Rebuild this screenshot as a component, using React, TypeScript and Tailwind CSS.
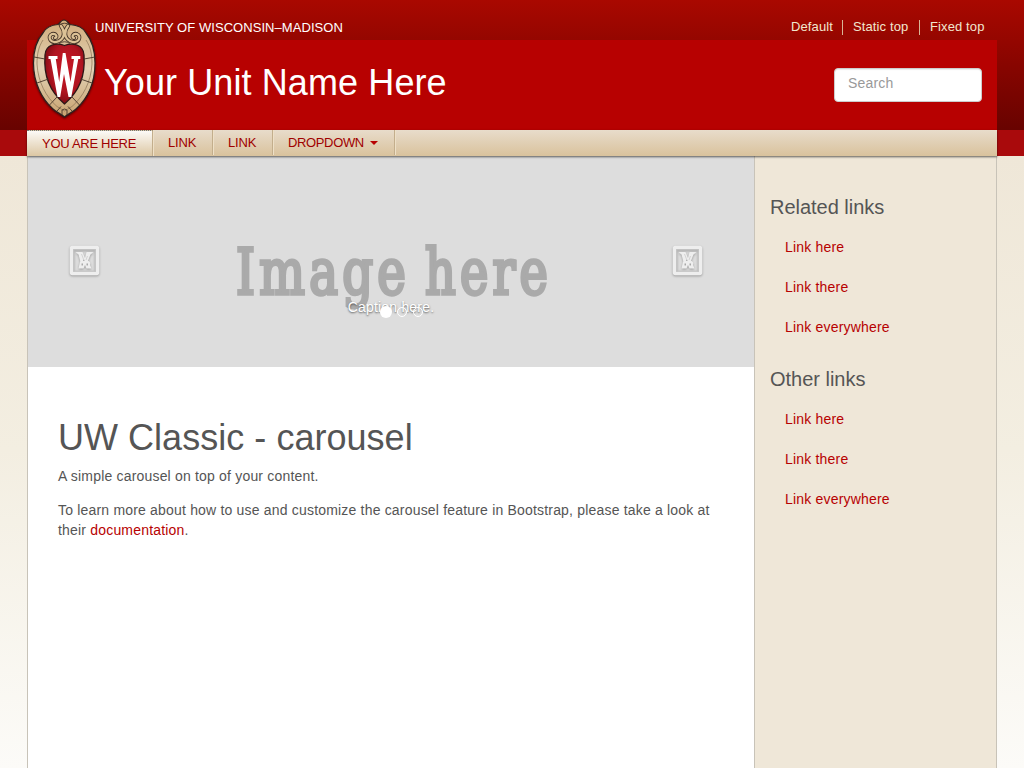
import React from "react";

const CURLS =
  "M61 26C65 31 65 38 59 41C50 45 47 36 52 34C56 33 58 37 55 38M68 26C64 31 64 38 70 41C79 45 82 36 77 34C73 33 71 37 74 38";

function Crest() {
  return (
    <svg className="absolute left-[4px] top-[16px] h-[106px] w-[68px]" viewBox="31 16 68 106" fill="none">
      <defs>
        <linearGradient id="stone" x1="0" y1="0" x2="0" y2="1">
          <stop offset="0" stopColor="#d0ac7b" />
          <stop offset=".5" stopColor="#e2d2b5" />
          <stop offset="1" stopColor="#c9a26f" />
        </linearGradient>
        <radialGradient id="ruby" cx=".55" cy=".4" r=".65">
          <stop offset="0" stopColor="#c91827" />
          <stop offset=".6" stopColor="#b01420" />
          <stop offset="1" stopColor="#74080f" />
        </radialGradient>
        <filter id="crestShadow" x="-20%" y="-20%" width="140%" height="140%">
          <feDropShadow dx="0" dy="1" stdDeviation="1.2" floodColor="#000" floodOpacity=".6" />
        </filter>
      </defs>
      <g filter="url(#crestShadow)">
        <path d="M64 20C60.500 20 60.500 23 58 24.500C52 25 46 27 43 33C36 41 33.500 51 33.500 63C33.500 83 42 99 53 109C57 112.500 61 114 64.500 117C68 114 72 112.500 76 109C87 99 95 83 95 63C95 51 92.500 41 86 33C83 27 76 25 70 24.500C67.500 23 67.500 20 64 20Z" fill="url(#stone)" stroke="#2c2220" strokeWidth="1.200" />
      </g>
      <path d="M43 40C38.500 47 37 54 37 64C38 82 46 97 57 106.500L64.500 111L72 106.500C83 97 91 82 92 64C92 54 90.500 47 86 40" stroke="#8a7254" strokeWidth=".7" />
      <path d="M64.500 45.500C57 42.500 45.500 44 45 55C43.500 76 49.500 91 64.500 104C79.500 91 85.500 76 84 55C83.500 44 72 42.500 64.500 45.500Z" fill="url(#ruby)" stroke="#2c1717" strokeWidth="1.300" />
      <g stroke="#463629" strokeWidth=".9">
        <path d="M34 57L45 59M95 57L84 59M37 83L48.500 79M92 83L80.500 79M49.500 105L57 97M79.500 105L72 97" />
        <path d="M62 115V110Q64.500 108 67 110V115M57 111L61 106.500M72 111L68 106.500" />
        <path d="M58.500 25Q64.500 21.500 70.500 25M59 43.500Q64.500 40 70 43.500" />
      </g>
      <path d={CURLS} stroke="#463629" strokeWidth="4" strokeLinecap="round" />
      <path d={CURLS} stroke="#dcc296" strokeWidth="2.300" strokeLinecap="round" />
      <path d="M48.500 56H57.500V59H55.800L59.200 82L62.800 53H65.500L70.500 82L74 59H71.500V56H80.300V59H78.300L71.300 97H68.500L64 74L60.200 97H57.500L50.500 59H48.500Z" fill="#fff" />
    </svg>
  );
}

function CarouselControl({ className }: { className: string }) {
  return (
    <button className={"absolute top-[88px] h-[32px] w-[32px] " + className} aria-label="Slide">
      <svg viewBox="0 0 32 32" width="32" height="32" fill="none" className="drop-shadow-[0_1px_1px_rgba(0,0,0,0.3)]">
        <rect x="2.500" y="3.500" width="26" height="26" rx="1" stroke="#eee" strokeWidth="3.500" />
        <rect x="4.800" y="5.800" width="21.400" height="21.400" stroke="#c8c8c8" strokeWidth="1" />
        <g fill="#eee">
          <path d="M6.500 8H13.500L16 14L17.500 8H24.500L21.500 10.500L18.500 18H16L14.800 15L13.500 18H11.500L9.500 10.500Z" />
          <path fillRule="evenodd" d="M12 17H19.500Q22 18 21 21L22.500 24.500H17.500L16 21L14.500 24.500H9.500L10.500 20Q10.500 17.500 12 17ZM12.500 19.500V21.500H14V19.500ZM17.500 19.500V21.500H19V19.500Z" />
        </g>
        <path d="M12.500 10L15 16.500M18.500 12L17 16" stroke="#cfcfcf" strokeWidth=".9" />
      </svg>
    </button>
  );
}

const navItem =
  "flex h-[25px] items-center border-r border-[#c3ae8c] shadow-[1px_0_0_#eee0c7] pl-[15px] text-[13px] text-[#a00000]";

function LinkGroup({ title, className }: { title: string; className: string }) {
  return (
    <section className={className}>
      <h3 className="h-[22px] text-[20px] leading-[22px] tracking-[-0.02px] text-[#555]">{title}</h3>
      <ul className="mt-[9px] pl-[15px] text-[14px] leading-5 text-[#b70101]">
        {["Link here", "Link there", "Link everywhere"].map((t) => (
          <li key={t} className="py-[10px]">
            <a href="#">{t}</a>
          </li>
        ))}
      </ul>
    </section>
  );
}

export default function App() {
  return (
    <div className="h-[768px] overflow-hidden bg-[linear-gradient(to_bottom,#a90a0c_0px,#a90a0c_156px,#efe7d8_156px,#f3eee1_450px,#fcfbf8_768px)] font-['Liberation_Sans',Arial,sans-serif] text-[14px] leading-5 tracking-[0.187px] text-[#555]">
      <header className="h-[130px] bg-linear-to-b from-[#a90800] to-[#680300]">
        <div className="relative ml-[27px] w-[970px]">
          <div className="flex h-[40px] justify-between pl-[68px] pr-[12px] text-[13px]">
            <div className="pt-[18px] leading-[20px] tracking-[0.06px] text-white">UNIVERSITY OF WISCONSIN–MADISON</div>
            <nav className="flex pt-[20px] leading-[14px] tracking-[0.12px] text-[#f2e6cf]">
              <a href="#" className="h-[15px] w-[51px]">Default</a>
              <a href="#" className="h-[15px] w-[77px] border-l border-[#d8b597] pl-[10px]">Static top</a>
              <a href="#" className="h-[15px] w-[66px] whitespace-nowrap border-l border-[#d8b597] pl-[10px]">Fixed top</a>
            </nav>
          </div>
          <div className="flex h-[90px] items-start justify-between bg-[#b70101] pl-[77px] pr-[15px]">
            <h1 className="mt-[23px] text-[36px] leading-[40px] tracking-[0.1px] text-white">Your Unit Name Here</h1>
            <input
              placeholder="Search"
              className="mt-[28px] h-[34px] w-[148px] rounded-[4px] border border-[#ccc] bg-white px-[13px] pb-[4px] text-[14px] tracking-[0.187px] shadow-[inset_0_1px_1px_rgba(0,0,0,0.08)] placeholder:text-[#999]"
            />
          </div>
          <Crest />
        </div>
      </header>

      <nav className="relative z-10 ml-[27px] flex h-[26px] w-[970px] bg-linear-to-b from-[#e8dccb] to-[#d9c29c] shadow-[0_1px_2px_rgba(0,0,0,0.6)]">
        <a href="#" className="flex h-[26px] w-[126px] items-center border-r border-t border-r-[#c3ae8c] border-t-[#777] [border-top-style:dotted] bg-linear-to-b from-[#fcfaf7] to-[#dcc7a3] pl-[15px] text-[13px] tracking-[-0.29px] text-[#a00000] shadow-[1px_0_0_#eee0c7]">YOU ARE HERE</a>
        <a href="#" className={navItem + " w-[60px] tracking-[-0.2px]"}>LINK</a>
        <a href="#" className={navItem + " w-[60px] tracking-[-0.2px]"}>LINK</a>
        <a href="#" className={navItem + " w-[122px] tracking-[-0.36px]"}>
          DROPDOWN
          <span className="ml-[6px] border-x-4 border-t-4 border-x-transparent border-t-[#b70101]" />
        </a>
      </nav>

      <div className="ml-[27px] flex h-[612px] w-[970px] border-x border-[#c8c3b8] bg-white">
        <main className="w-[726px]">
          <div className="relative h-[211px] bg-[#ddd]">
            <svg className="absolute left-[200px] top-[73px] h-[100px] w-[340px] overflow-visible" viewBox="0 0 340 100">
              <g fill="#aaa" stroke="#aaa" strokeWidth="3.400" fontFamily="DejaVu Serif Condensed, DejaVu Serif, serif" fontSize="63" letterSpacing="5">
                <text x="8" y="64.500" textLength="174" lengthAdjust="spacingAndGlyphs">Image</text>
                <text x="197" y="64.500" textLength="127" lengthAdjust="spacingAndGlyphs">here</text>
              </g>
            </svg>
            <CarouselControl className="left-[41px]" />
            <CarouselControl className="left-[644px]" />
            <p className="absolute left-0 top-[141px] w-full text-center text-white [text-shadow:0_1px_2px_rgba(0,0,0,0.6)]">Caption here.</p>
            <div className="absolute left-[352px] top-[150px] flex items-center gap-[6px]">
              <span className="-mr-px h-[12px] w-[12px] rounded-full bg-white" />
              <span className="h-[10px] w-[10px] rounded-full border border-white" />
              <span className="h-[10px] w-[10px] rounded-full border border-white" />
            </div>
          </div>
          <article className="px-[30px] pt-[51px]">
            <h1 className="text-[36px] leading-[40px] tracking-[0.03px]">UW Classic - carousel</h1>
            <p className="mt-[8px]">A simple carousel on top of your content.</p>
            <p className="mt-[14px] whitespace-nowrap">
              To learn more about how to use and customize the carousel feature in Bootstrap, please take a look at
              <br />
              their <a href="#" className="text-[#b70101]">documentation</a>.
            </p>
          </article>
        </main>
        <aside className="flex-1 border-l border-[#c8c3b8] bg-[#efe7d8] px-[15px]">
          <LinkGroup title="Related links" className="mt-[40px]" />
          <LinkGroup title="Other links" className="mt-[21px]" />
        </aside>
      </div>
    </div>
  );
}
